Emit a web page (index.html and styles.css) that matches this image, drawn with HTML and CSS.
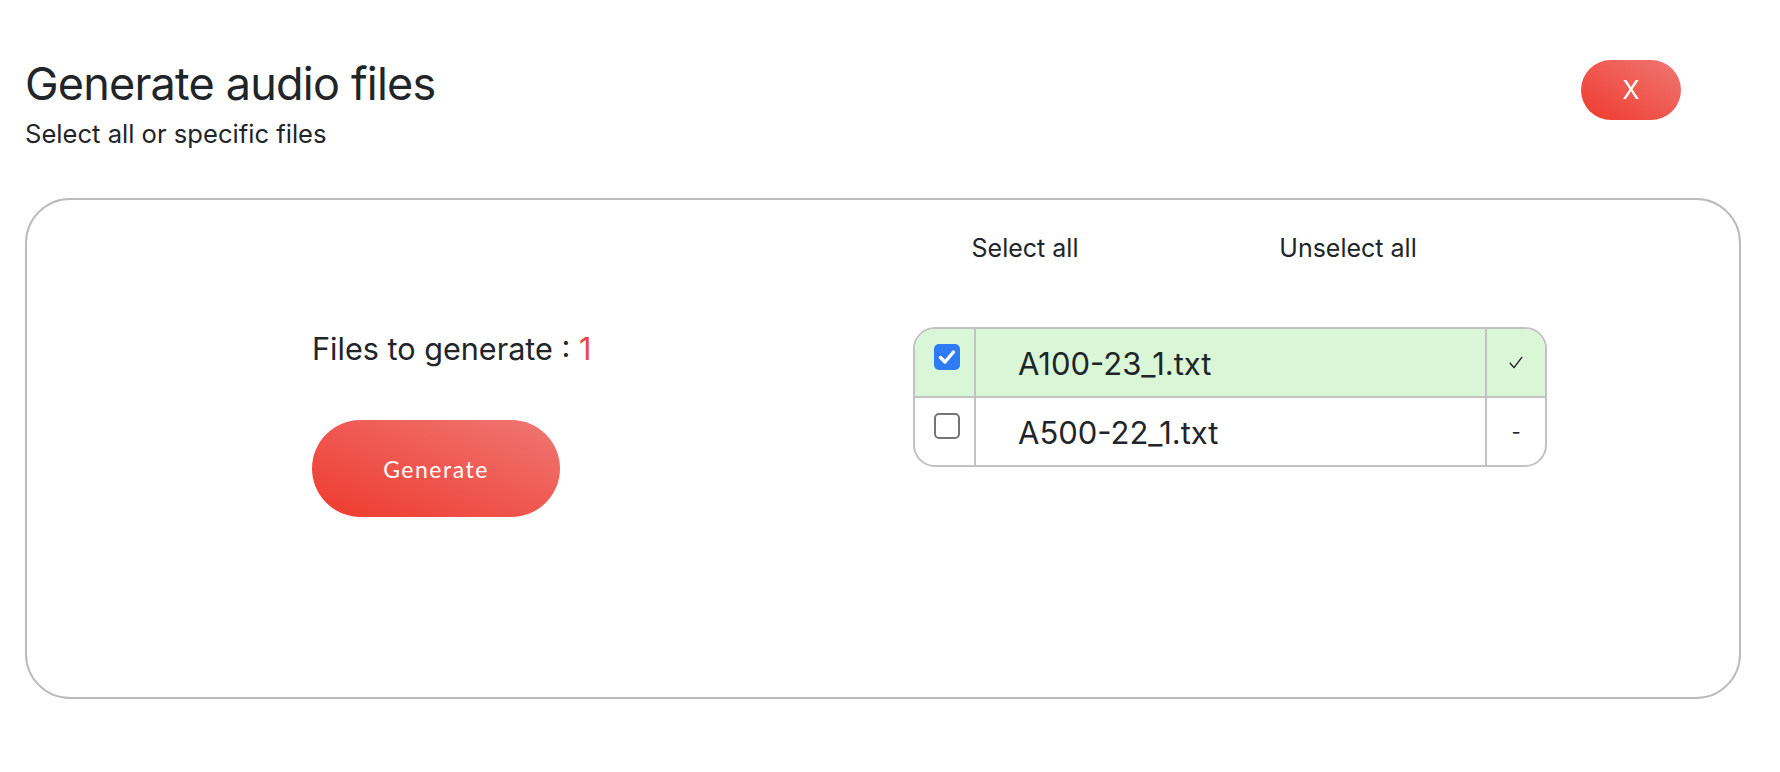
FILE: index.html
```html
<!DOCTYPE html>
<html lang="en">
<head>
<meta charset="utf-8">
<title>Generate audio files</title>
<link rel="stylesheet" href="styles.css">
</head>
<body>
<div class="page">
  <header class="head">
    <div class="head-text">
      <h1 class="title">Generate audio files</h1>
      <p class="subtitle">Select all or specific files</p>
    </div>
    <button class="close" type="button">X</button>
  </header>

  <section class="card">
    <div class="left">
      <div class="summary">
        <p class="count">Files to generate : <span class="num">1</span></p>
        <button class="gen" type="button">Generate</button>
      </div>
    </div>

    <div class="right">
      <div class="actions">
        <button class="link" type="button">Select all</button>
        <button class="link" type="button">Unselect all</button>
      </div>

      <div class="files">
        <div class="row row-on">
          <div class="cell cell-box"><span class="box box-on"><svg viewBox="0 0 26 26" width="26" height="26"><path d="M6.5 13.5 L11 18 L19.5 8" fill="none" stroke="#fff" stroke-width="3.4" stroke-linecap="round" stroke-linejoin="round"/></svg></span></div>
          <div class="cell cell-name">A100-23_1.txt</div>
          <div class="cell cell-state"><svg class="tick" viewBox="0 0 14 13" width="14" height="13"><path d="M1.2 7.2 L5 11.6 L12.8 1.4" fill="none" stroke="#222" stroke-width="1.4" stroke-linecap="round" stroke-linejoin="round"/></svg></div>
        </div>
        <div class="row">
          <div class="cell cell-box"><span class="box"></span></div>
          <div class="cell cell-name">A500-22_1.txt</div>
          <div class="cell cell-state"><span class="dash">-</span></div>
        </div>
      </div>
    </div>
  </section>
</div>
</body>
</html>
```

FILE: styles.css
```css
* { box-sizing: border-box; }

html, body {
  margin: 0;
  background: #ffffff;
}

body {
  font-family: Inter, "Noto Sans", "Liberation Sans", sans-serif;
  color: #212529;
}

.page {
  padding: 57px 39px 0 25px;
}

.head {
  display: flex;
  justify-content: space-between;
  align-items: flex-start;
}

.title {
  margin: 0;
  font-size: 45px;
  line-height: 54px;
  font-weight: 400;
  letter-spacing: -0.8px;
}

.subtitle {
  margin: 8px 0 0;
  font-size: 25.6px;
  line-height: 30px;
}

button {
  font-family: inherit;
  border: 0;
  padding: 0;
  cursor: pointer;
}

.close {
  margin: 3px 60px 0 0;
  width: 100px;
  height: 60px;
  border-radius: 30px;
  background: linear-gradient(to top right, #ee3a2e, #f07773);
  color: #fff;
  font-size: 25px;
}

.card {
  margin-top: 49px;
  height: 501px;
  border: 2px solid #bbbbbb;
  border-radius: 45px;
  display: grid;
  grid-template-columns: 1fr 1fr;
}

.left {
  padding: 131px 0 0 285px;
}

.count {
  margin: 0;
  font-size: 30.6px;
  line-height: 36px;
}

.num {
  color: #e94848;
}

.gen {
  margin-top: 53px;
  width: 248px;
  height: 97px;
  border-radius: 49px;
  background: linear-gradient(to top right, #ee3a2e, #f07773);
  color: #fff;
  font-family: Lato, "Noto Sans", sans-serif;
  font-size: 23px;
  letter-spacing: 1.5px;
}

.right {
  padding-top: 33px;
}

.actions {
  display: flex;
  gap: 123px;
  padding-left: 42px;
}

.link {
  width: 200px;
  background: none;
  color: #212529;
  font-size: 25px;
  line-height: 30px;
  text-align: center;
}

.files {
  margin: 64px 0 0 30px;
  width: 634px;
  border: 2px solid #c2c2c2;
  border-radius: 22px;
  overflow: hidden;
}

.row {
  display: grid;
  grid-template-columns: 61px 1fr 58px;
  height: 67px;
}

.row-on {
  background: #d9f6d6;
  height: 69px;
  border-bottom: 2px solid #c2c2c2;
}

.cell {
  display: flex;
  align-items: center;
}

.cell-box {
  border-right: 2px solid #c2c2c2;
  align-items: flex-start;
  justify-content: center;
  padding: 15px 0 0 4px;
}

.cell-name {
  border-right: 2px solid #c2c2c2;
  padding-left: 42px;
  font-size: 31px;
  line-height: 36px;
  padding-top: 2px;
}

.cell-state {
  justify-content: center;
}

.box {
  display: block;
  width: 26px;
  height: 26px;
  border-radius: 5px;
  border: 2px solid #747474;
  background: #fff;
}

.box-on {
  border: 0;
  background: #2f7af6;
}

.box svg { display: block; }

.tick { display: block; }

.dash {
  font-size: 20px;
  line-height: 20px;
}
```
